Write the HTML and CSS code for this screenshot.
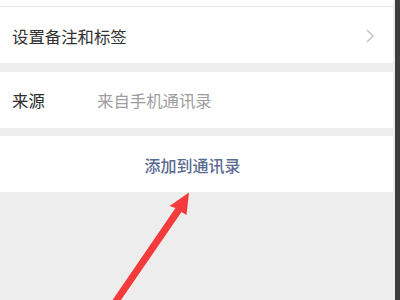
FILE: index.html
```html
<!DOCTYPE html>
<html lang="zh">
<head>
<meta charset="utf-8">
<link rel="stylesheet" href="styles.css">
</head>
<body>
<div class="screen">
  <div class="content">
    <div class="top"></div>
    <div class="card row first">
      <span class="label-main">设置备注和标签</span>
      <svg class="chev" width="8" height="14" viewBox="0 0 8 14"><path d="M1 1 L7 7 L1 13" fill="none" stroke="#c4c4c4" stroke-width="1.5"/></svg>
    </div>
    <div class="card row">
      <span class="key">来源</span>
      <span class="val">来自手机通讯录</span>
    </div>
    <div class="card row action">添加到通讯录</div>
  </div>
  <div class="edge"></div>
  <svg class="arrow" width="400" height="300" viewBox="0 0 400 300">
    <polygon points="189,192.5 186.5,215 181.5,212 121,300 112.5,300 175.5,208 169.5,206" fill="#f43b3b"/>
  </svg>
</div>
</body>
</html>
```
FILE: styles.css
```css
html, body {
  margin: 0;
  padding: 0;
}
body {
  width: 400px;
  height: 300px;
  overflow: hidden;
  font-family: "Noto Sans CJK SC", "Noto Sans", sans-serif;
}
.screen {
  position: relative;
  display: flex;
  width: 400px;
  height: 300px;
  background: #ededed;
}
.content {
  width: 395px;
  display: flex;
  flex-direction: column;
  gap: 8px;
}
.edge {
  width: 5px;
  background: #3d3d3d;
}
.top {
  width: 393px;
  height: 6px;
  background: #fff;
  border-bottom: 1px solid #e8e8e8;
  margin-bottom: -8px;
}
.card {
  width: 393px;
  background: #fff;
}
.row {
  height: 56px;
  display: flex;
  align-items: center;
  padding: 0 12px;
  box-sizing: border-box;
  font-size: 16.4px;
}
.first {
  margin-bottom: 1px;
  padding-top: 1px;
}
.label-main {
  color: #323232;
  flex: 1;
}
.chev {
  margin-right: 7px;
}
.key {
  color: #2b2b2b;
  width: 85px;
}
.val {
  color: #9e9e9e;
}
.action {
  justify-content: center;
  padding-top: 2px;
  padding-right: 20px;
  color: #5a6b92;
  font-size: 16px;
  font-weight: 500;
}
.arrow {
  position: absolute;
  left: 0;
  top: 0;
}
```
